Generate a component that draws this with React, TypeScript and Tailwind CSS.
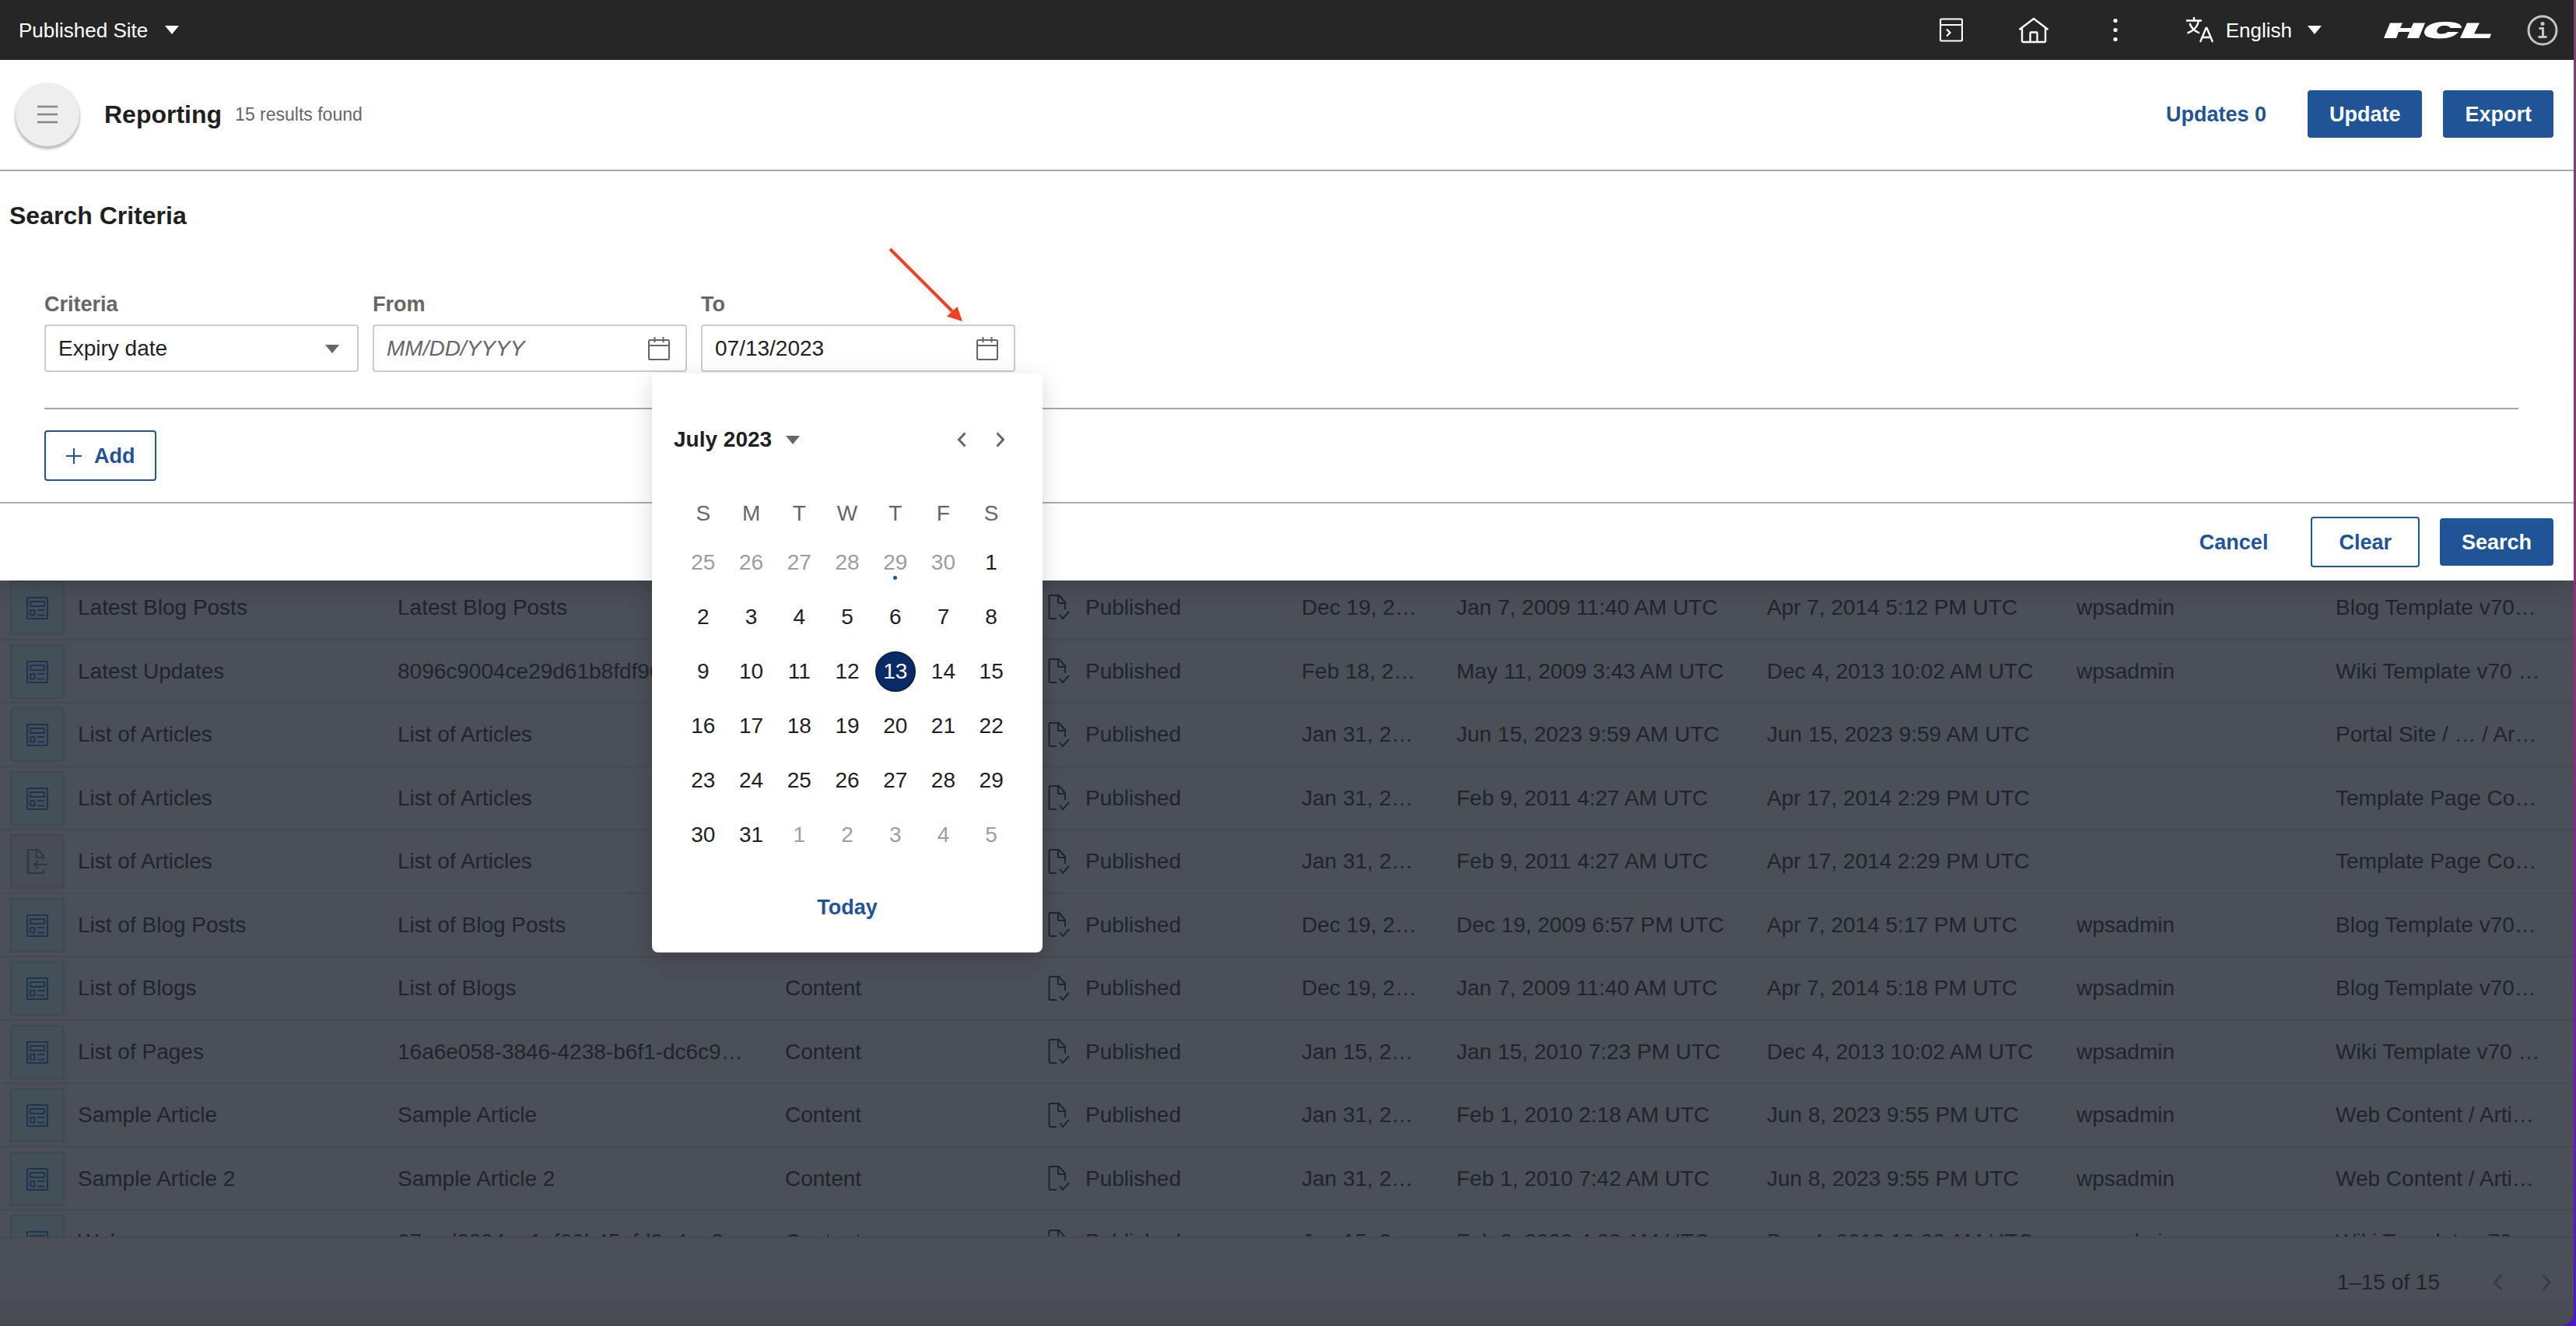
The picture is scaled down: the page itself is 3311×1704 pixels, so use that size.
import React from "react";

type Kind = "content" | "link";
type Row = {
  kind: Kind;
  title: string;
  name: string;
  published: string;
  created: string;
  modified: string;
  author: string;
  location: string;
};

const rows: Row[] = [
  { kind: "content", title: "Latest Blog Posts", name: "Latest Blog Posts", published: "Dec 19, 2…", created: "Jan 7, 2009 11:40 AM UTC", modified: "Apr 7, 2014 5:12 PM UTC", author: "wpsadmin", location: "Blog Template v70…" },
  { kind: "content", title: "Latest Updates", name: "8096c9004ce29d61b8fdf90…", published: "Feb 18, 2…", created: "May 11, 2009 3:43 AM UTC", modified: "Dec 4, 2013 10:02 AM UTC", author: "wpsadmin", location: "Wiki Template v70 …" },
  { kind: "content", title: "List of Articles", name: "List of Articles", published: "Jan 31, 2…", created: "Jun 15, 2023 9:59 AM UTC", modified: "Jun 15, 2023 9:59 AM UTC", author: "", location: "Portal Site / … / Ar…" },
  { kind: "content", title: "List of Articles", name: "List of Articles", published: "Jan 31, 2…", created: "Feb 9, 2011 4:27 AM UTC", modified: "Apr 17, 2014 2:29 PM UTC", author: "", location: "Template Page Co…" },
  { kind: "link", title: "List of Articles", name: "List of Articles", published: "Jan 31, 2…", created: "Feb 9, 2011 4:27 AM UTC", modified: "Apr 17, 2014 2:29 PM UTC", author: "", location: "Template Page Co…" },
  { kind: "content", title: "List of Blog Posts", name: "List of Blog Posts", published: "Dec 19, 2…", created: "Dec 19, 2009 6:57 PM UTC", modified: "Apr 7, 2014 5:17 PM UTC", author: "wpsadmin", location: "Blog Template v70…" },
  { kind: "content", title: "List of Blogs", name: "List of Blogs", published: "Dec 19, 2…", created: "Jan 7, 2009 11:40 AM UTC", modified: "Apr 7, 2014 5:18 PM UTC", author: "wpsadmin", location: "Blog Template v70…" },
  { kind: "content", title: "List of Pages", name: "16a6e058-3846-4238-b6f1-dc6c9…", published: "Jan 15, 2…", created: "Jan 15, 2010 7:23 PM UTC", modified: "Dec 4, 2013 10:02 AM UTC", author: "wpsadmin", location: "Wiki Template v70 …" },
  { kind: "content", title: "Sample Article", name: "Sample Article", published: "Jan 31, 2…", created: "Feb 1, 2010 2:18 AM UTC", modified: "Jun 8, 2023 9:55 PM UTC", author: "wpsadmin", location: "Web Content / Arti…" },
  { kind: "content", title: "Sample Article 2", name: "Sample Article 2", published: "Jan 31, 2…", created: "Feb 1, 2010 7:42 AM UTC", modified: "Jun 8, 2023 9:55 PM UTC", author: "wpsadmin", location: "Web Content / Arti…" },
  { kind: "content", title: "Welcome", name: "07ced2894ee1ef20b45efd9e4ee8…", published: "Jan 15, 2…", created: "Feb 2, 2009 4:28 AM UTC", modified: "Dec 4, 2013 10:02 AM UTC", author: "wpsadmin", location: "Wiki Template v70 …" },
];

const weekdays = ["S", "M", "T", "W", "T", "F", "S"];
const weeks = [
  [25, 26, 27, 28, 29, 30, 1],
  [2, 3, 4, 5, 6, 7, 8],
  [9, 10, 11, 12, 13, 14, 15],
  [16, 17, 18, 19, 20, 21, 22],
  [23, 24, 25, 26, 27, 28, 29],
  [30, 31, 1, 2, 3, 4, 5],
];

function Caret({ className = "" }: { className?: string }) {
  return (
    <svg viewBox="0 0 18 11" className={`h-[11px] w-[18px] shrink-0 ${className}`} fill="currentColor" aria-hidden="true">
      <path d="M0 0h18l-9 11z" />
    </svg>
  );
}

function Chevron({ dir, className = "" }: { dir: "left" | "right"; className?: string }) {
  return (
    <svg viewBox="0 0 12 20" className={className} fill="none" stroke="currentColor" strokeWidth="3" aria-hidden="true">
      <path d={dir === "left" ? "M10.5 1.5L2.5 10l8 8.5" : "M1.5 1.5L9.5 10l-8 8.5"} />
    </svg>
  );
}

function CalendarIcon() {
  return (
    <svg viewBox="0 0 28 30" className="h-[30px] w-7" fill="none" stroke="currentColor" strokeWidth="2" aria-hidden="true">
      <rect x="1" y="4" width="26" height="25" rx="1.5" />
      <path d="M1 11h26M8.500 0v7M19.500 0v7" />
    </svg>
  );
}

function ContentIcon() {
  return (
    <svg viewBox="0 0 28 30" className="h-[30px] w-7" fill="none" stroke="currentColor" strokeWidth="2.2" aria-hidden="true">
      <rect x="1" y="2" width="26" height="27" rx="1" />
      <rect x="5" y="7" width="18" height="6" rx="0.5" />
      <rect x="5" y="18" width="5.500" height="6.500" rx="0.5" />
      <path d="M14 18h9.500M14 24.500h9.500" />
    </svg>
  );
}

function LinkDocIcon() {
  return (
    <svg viewBox="0 0 28 32" className="h-8 w-7" fill="none" stroke="currentColor" strokeWidth="2.2" aria-hidden="true">
      <path d="M22 13V9l-7-8H3a1 1 0 0 0-1 1v28a1 1 0 0 0 1 1h18a1 1 0 0 0 1-1v-3" />
      <path d="M13 1v9a1 1 0 0 0 1 1h8M27 20H10M15 15l-5 5 5 5" />
    </svg>
  );
}

function PublishedIcon() {
  return (
    <svg viewBox="0 0 28 33" className="h-[33px] w-7 shrink-0" fill="none" stroke="currentColor" strokeWidth="2" aria-hidden="true">
      <path d="M11 31H3a1.500 1.500 0 0 1-1.500-1.500V2.500A1.500 1.500 0 0 1 3 1h11l8 9v9" />
      <path d="M13 1v9a1 1 0 0 0 1 1h8M15 26l4 5 8-9" />
    </svg>
  );
}

function TopBar() {
  return (
    <header className="flex h-[77px] shrink-0 items-center justify-between bg-[#262626] pr-5 pl-6 text-[26px] leading-8 text-white">
      <button type="button" className="flex items-center gap-[22px]">
        Published Site
        <Caret />
      </button>
      <div className="flex items-center">
        <button type="button" aria-label="Console" className="mr-[71px]">
          <svg viewBox="0 0 30 32" className="h-8 w-[30px]" fill="none" stroke="currentColor" strokeWidth="2.2">
            <rect x="1" y="1.5" width="28" height="28" rx="1.5" />
            <path d="M1 9h28M9 14.500l4.500 4.500L9 23.500" />
          </svg>
        </button>
        <button type="button" aria-label="Home" className="mr-[81px]">
          <svg viewBox="0 0 40 34" className="h-[34px] w-10" fill="none" stroke="currentColor" strokeWidth="2.4">
            <path d="M1.500 16L20 2l18.500 14M5 14v16.500A1.500 1.500 0 0 0 6.500 32h27a1.500 1.500 0 0 0 1.500-1.500V14" />
            <path d="M15.500 32V20.500a1 1 0 0 1 1-1h7a1 1 0 0 1 1 1V32" />
          </svg>
        </button>
        <button type="button" aria-label="More" className="mr-[86px]">
          <svg viewBox="0 0 8 32" className="h-8 w-2" fill="currentColor">
            <circle cx="4" cy="3.500" r="2.600" />
            <circle cx="4" cy="15.500" r="2.600" />
            <circle cx="4" cy="27.500" r="2.600" />
          </svg>
        </button>
        <button type="button" className="mr-[80px] flex items-center">
          <svg viewBox="0 0 36 33" className="mr-4 h-[33px] w-9" fill="none" stroke="currentColor" strokeWidth="2.4" aria-hidden="true">
            <path d="M1 4.500h20M11 0v4.500M17 5c-1.500 7-7 13-14.500 15.500M5.500 8c2 6 6 10 12.500 12.500" />
            <path d="M19 32l7.500-18h1L35 32M21.500 26h11" />
          </svg>
          English
          <Caret className="ml-5" />
        </button>
        <svg viewBox="0 0 138 22" className="mr-[46px] h-[22px] w-[138px]" fill="currentColor" role="img" aria-label="HCL">
          <path d="M8 1.500H24L21 8h14l3-6.500h15L45 21H30l3-8H19l-3 8H0z" />
          <path d="M100 8H85c0-2-2.500-3-7-3-5 0-8.500 2-9.500 5.500-1 3.500 1 5 5.500 5 3.500 0 6-.7 8-2.500h14C92 18 84 21.500 71 21.500 57 21.500 50 18 52.500 11 55 4 64 0 78 0c15 0 22 2.500 22 8z" />
          <path d="M107 1.500h16L116 15.500h22L136 21H98z" />
        </svg>
        <button type="button" aria-label="About" className="text-[#c4c4c4]">
          <svg viewBox="0 0 40 40" className="h-10 w-10" fill="none" stroke="currentColor" strokeWidth="3">
            <circle cx="20" cy="20" r="18" />
            <circle cx="20" cy="11.500" r="2.500" fill="currentColor" stroke="none" />
            <path d="M15.500 17.500h5V28M14.500 28.500h11" />
          </svg>
        </button>
      </div>
    </header>
  );
}

function DateField({ id, label, value, children }: { id: string; label: string; value?: string; children?: React.ReactNode }) {
  return (
    <div className="relative w-[404px]">
      <label htmlFor={id} className="block text-[27px] leading-9 font-bold text-[#666]">{label}</label>
      <div className="mt-2 flex h-[61px] items-center rounded-[4px] border-2 border-[#ccc] pr-5 pl-4 text-[#666]">
        <input
          id={id}
          type="text"
          defaultValue={value}
          placeholder="MM/DD/YYYY"
          className="min-w-0 flex-1 bg-transparent text-[28px] leading-9 text-[#1f1f1f] outline-none placeholder:text-[#666] placeholder:italic"
        />
        <button type="button" aria-label={`Choose ${label} date`}>
          <CalendarIcon />
        </button>
      </div>
      {children}
    </div>
  );
}

function Day({ day, week }: { day: number; week: number }) {
  const outside = (week === 0 && day > 20) || (week === 5 && day < 20);
  const selected = week === 2 && day === 13;
  const today = week === 0 && day === 29;
  return (
    <button
      type="button"
      className={`relative flex size-[52px] items-center justify-center rounded-full ${
        selected ? "border-2 border-[#08224f] bg-[#0a2a66] text-white" : outside ? "text-[#9e9e9e]" : "text-[#1f1f1f]"
      }`}
    >
      {day}
      {today && (
        <span className="absolute inset-x-0 bottom-1 flex justify-center">
          <span className="size-[5px] rounded-full bg-[#1f5497]" />
        </span>
      )}
    </button>
  );
}

function DatePicker() {
  return (
    <div role="dialog" aria-label="Choose date" className="absolute top-[107px] right-[-35px] z-20 flex h-[744px] w-[502px] flex-col rounded-lg bg-white shadow-[0_8px_30px_rgba(0,0,0,0.16)]">
      <div className="mt-[65px] flex h-10 items-center justify-between pr-12 pl-7">
        <button type="button" className="flex items-center gap-[18px] text-[28px] leading-9 font-bold text-[#1f1f1f]">
          July 2023
          <Caret className="text-[#666]" />
        </button>
        <div className="flex gap-[38px] text-[#666]">
          <button type="button" aria-label="Previous month"><Chevron dir="left" className="h-5 w-3" /></button>
          <button type="button" aria-label="Next month"><Chevron dir="right" className="h-5 w-3" /></button>
        </div>
      </div>
      <div className="mt-[57px] grid grid-cols-7 px-[35px] text-[28px] leading-9">
        {weekdays.map((d, i) => (
          <span key={i} className="flex h-9 items-center justify-center text-[#666]">{d}</span>
        ))}
      </div>
      <div className="mt-[10px] grid grid-cols-7 px-[35px] text-[28px] leading-9">
        {weeks.map((week, w) =>
          week.map((d) => (
            <div key={`${w}-${d}`} className="flex h-[70px] items-center justify-center">
              <Day day={d} week={w} />
            </div>
          ))
        )}
      </div>
      <button type="button" className="mx-auto mt-10 text-[27px] leading-9 font-bold text-[#1f5497]">Today</button>
    </div>
  );
}

function Arrow() {
  return (
    <svg viewBox="0 0 96 96" className="pointer-events-none absolute top-[-55px] right-[67px] size-24" aria-hidden="true">
      <path d="M2 2l80 80" stroke="#ee4023" strokeWidth="4" />
      <path d="M95 95l-20-6.500 13.500-12.500z" fill="#ee4023" />
    </svg>
  );
}

const primary = "h-[61px] rounded-[4px] bg-[#1f5497] px-7 text-[27px] leading-9 font-bold text-white";
const outline = "h-[65px] rounded-[4px] border-2 border-[#1f5497] text-[27px] leading-9 font-bold text-[#1f5497]";

function SearchPanel() {
  return (
    <form className="relative z-10 shrink-0 bg-white shadow-[0_6px_30px_rgba(0,0,0,0.2)]">
      <h2 className="pt-[37px] pl-3 text-[32px] leading-10 font-bold text-[#1f1f1f]">Search Criteria</h2>
      <div className="mt-[76px] flex gap-[18px] pl-[57px]">
        <div className="w-[404px]">
          <label htmlFor="criteria" className="block text-[27px] leading-9 font-bold text-[#666]">Criteria</label>
          <div className="relative mt-2">
            <select id="criteria" className="block h-[61px] w-full appearance-none rounded-[4px] border-2 border-[#ccc] bg-white px-4 text-[28px] leading-9 text-[#1f1f1f]">
              <option>Expiry date</option>
            </select>
            <Caret className="pointer-events-none absolute top-[26px] right-[25px] text-[#666]" />
          </div>
        </div>
        <DateField id="from" label="From" />
        <DateField id="to" label="To" value="07/13/2023">
          <DatePicker />
          <Arrow />
        </DateField>
      </div>
      <hr className="mt-[46px] mr-[71px] ml-[57px] border-t-2 border-[#a8a8a8]" />
      <button type="button" className={`mt-[27px] ml-[57px] flex items-center gap-4 px-[26px] ${outline}`}>
        <svg viewBox="0 0 20 20" className="size-5" stroke="currentColor" strokeWidth="2" aria-hidden="true">
          <path d="M0 10h20M10 0v20" />
        </svg>
        Add
      </button>
      <div className="mt-[27px] flex h-[101px] items-center justify-end border-t-2 border-[#ababab] pr-[26px]">
        <button type="button" className="mr-[55px] text-[27px] leading-9 font-bold text-[#1f5497]">Cancel</button>
        <button type="button" className={`mr-[26px] px-[34px] ${outline}`}>Clear</button>
        <button type="submit" className={primary}>Search</button>
      </div>
    </form>
  );
}

function ResultsTable() {
  return (
    <table className="w-full table-fixed border-collapse text-left text-[28px] leading-9 whitespace-nowrap">
      <colgroup>
        <col className="w-[100px]" />
        <col className="w-[411px]" />
        <col className="w-[498px]" />
        <col className="w-[338px]" />
        <col className="w-[326px]" />
        <col className="w-[199px]" />
        <col className="w-[399px]" />
        <col className="w-[398px]" />
        <col className="w-[333px]" />
        <col />
      </colgroup>
      <tbody>
        {rows.map((r, i) => (
          <tr key={i} className="h-[81px] border-b-2 border-[#454950] odd:h-[82px]">
            <td className="pl-[13px]">
              {r.kind === "content" ? (
                <span className="flex size-[70px] items-center justify-center rounded-[4px] border-2 border-[#3e4a50] bg-[#445058] text-[#1f3450]">
                  <ContentIcon />
                </span>
              ) : (
                <span className="flex size-[70px] items-center justify-center rounded-[4px] border-2 border-[#42464c] bg-[#484c54] text-[#32363d]">
                  <LinkDocIcon />
                </span>
              )}
            </td>
            <td>{r.title}</td>
            <td>{r.name}</td>
            <td>Content</td>
            <td>
              <span className="flex items-center gap-5">
                <PublishedIcon />
                Published
              </span>
            </td>
            <td>{r.published}</td>
            <td>{r.created}</td>
            <td>{r.modified}</td>
            <td>{r.author}</td>
            <td>{r.location}</td>
          </tr>
        ))}
      </tbody>
    </table>
  );
}

export default function App() {
  return (
    <div className="flex h-screen overflow-hidden bg-[linear-gradient(#7a4568,#8f2f7c_50%,#6a1cb0_85%,#4a18c4)] font-['Liberation_Sans',Arial,sans-serif]">
      <div className="mr-[3px] flex min-w-0 flex-1 flex-col overflow-hidden rounded-br-[18px] bg-[#4b4f57] text-[#20242d]">
        <TopBar />
        <section className="relative z-20 flex h-[143px] shrink-0 items-center border-b-2 border-[#a8a8a8] bg-white pr-[26px] pb-0.5 pl-5">
          <button type="button" aria-label="Menu" className="flex size-[82px] items-center justify-center rounded-full bg-[#eee] text-[#858585] shadow-[0_3px_3px_1px_rgba(0,0,0,0.25)]">
            <svg viewBox="0 0 26 24" className="h-6 w-[26px]" stroke="currentColor" strokeWidth="2.5" aria-hidden="true">
              <path d="M0 2h26M0 12h26M0 22h26" />
            </svg>
          </button>
          <h1 className="ml-8 text-[32px] leading-10 font-bold text-[#1f1f1f]">Reporting</h1>
          <p className="ml-[17px] text-[23px] leading-8 text-[#666]">15 results found</p>
          <span className="mr-[53px] ml-auto text-[27px] leading-9 font-bold text-[#1f5497]">Updates 0</span>
          <button type="button" className={`mr-[27px] ${primary}`}>Update</button>
          <button type="button" className={primary}>Export</button>
        </section>
        <SearchPanel />
        <main className="-mt-1.5 min-h-0 flex-1 overflow-hidden">
          <ResultsTable />
        </main>
        <footer className="flex h-[115px] shrink-0 items-center justify-end border-t-2 border-[#454950] bg-linear-to-b from-[#4b4f57] from-60% to-[#474a51] pr-7 text-[28px] leading-9">
          <span className="mr-[68px]">1–15 of 15</span>
          <button type="button" aria-label="Previous page" className="mr-[50px] text-[#393d44]"><Chevron dir="left" className="h-[22px] w-[13px]" /></button>
          <button type="button" aria-label="Next page" className="text-[#393d44]"><Chevron dir="right" className="h-[22px] w-[13px]" /></button>
        </footer>
      </div>
    </div>
  );
}
